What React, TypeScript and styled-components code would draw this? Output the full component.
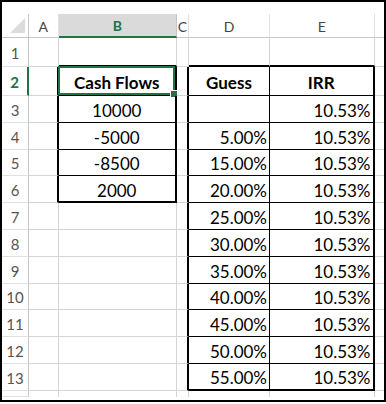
import { Fragment } from 'react';
import styled, { createGlobalStyle } from 'styled-components';

type Edge = 'grid' | 'thin' | 'thick' | 'none';

const GRID = '#d4d4d4';
const GREEN = '#217346';

const GlobalStyle = createGlobalStyle`
  html, body {
    margin: 0;
    padding: 0;
    background: #fff;
  }
`;

const Frame = styled.div`
  width: 386px;
  height: 402px;
  box-sizing: border-box;
  border: 2px solid #000;
  padding-top: 12px;
  overflow: hidden;
  background: #fff;
`;

const Sheet = styled.div`
  display: grid;
  grid-template-columns: 27px 29.5px 118.5px 12px 81px 104.5px 11px;
  grid-template-rows: 24px 28.5px 29.5px repeat(11, 26.8px) 6.2px;
  font-family: Lato, 'Open Sans', sans-serif;
  color: #000;
`;

const Corner = styled.div`
  position: relative;
  box-sizing: border-box;
  border-right: 1px solid #c6c6c6;
  border-bottom: 1px solid #c6c6c6;

  &::after {
    content: '';
    position: absolute;
    right: 3px;
    bottom: 4px;
    width: 0;
    height: 0;
    border-left: 15px solid transparent;
    border-bottom: 15px solid #dcdcdc;
  }
`;

const ColHead = styled.div<{ $active?: boolean }>`
  box-sizing: border-box;
  display: flex;
  align-items: center;
  justify-content: center;
  padding-top: 1px;
  font-size: 14px;
  font-weight: ${(p) => (p.$active ? 700 : 400)};
  color: ${(p) => (p.$active ? GREEN : '#444')};
  background: ${(p) => (p.$active ? '#dadada' : '#fff')};
  border-right: 1px solid ${(p) => (p.$active ? '#c6c6c6' : '#e1e1e1')};
  border-bottom: ${(p) => (p.$active ? `2px solid ${GREEN}` : '1px solid #c6c6c6')};
  overflow: hidden;
`;

const RowHead = styled.div<{ $active?: boolean }>`
  box-sizing: border-box;
  display: flex;
  align-items: center;
  justify-content: center;
  padding-top: 2px;
  font-size: 15px;
  font-weight: ${(p) => (p.$active ? 700 : 400)};
  color: ${(p) => (p.$active ? GREEN : '#555')};
  border-right: ${(p) => (p.$active ? `2px solid ${GREEN}` : '1px solid #c6c6c6')};
  border-bottom: 1px solid #e1e1e1;
`;

const edgeCss = (e: Edge) => {
  if (e === 'thick') return '2px solid #000';
  if (e === 'thin') return '1px solid #000';
  if (e === 'none') return '0';
  return `1px solid ${GRID}`;
};

const Cell = styled.div<{ $right: Edge; $bottom: Edge; $align?: 'center' | 'right'; $bold?: boolean }>`
  position: relative;
  box-sizing: border-box;
  display: flex;
  align-items: center;
  justify-content: ${(p) => (p.$align === 'right' ? 'flex-end' : 'center')};
  padding: 3px 2px 0 2px;
  font-size: 17px;
  font-weight: ${(p) => (p.$bold ? 700 : 400)};
  border-right: ${(p) => edgeCss(p.$right)};
  border-bottom: ${(p) => edgeCss(p.$bottom)};
  white-space: nowrap;
`;

const Selection = styled.div`
  position: absolute;
  top: -1px;
  left: -1px;
  right: 0;
  bottom: 0;
  border: 2px solid ${GREEN};
  pointer-events: none;
`;

const Handle = styled.div`
  position: absolute;
  right: -5px;
  bottom: -5px;
  width: 6px;
  height: 6px;
  background: ${GREEN};
  border: 1px solid #fff;
`;

interface Box {
  r0: number;
  r1: number;
  c0: number;
  c1: number;
}

const boxes: Box[] = [
  { r0: 2, r1: 6, c0: 2, c1: 2 },
  { r0: 2, r1: 13, c0: 4, c1: 5 },
];

const inBox = (b: Box, r: number, c: number) => r >= b.r0 && r <= b.r1 && c >= b.c0 && c <= b.c1;

const rightEdge = (r: number, c: number): Edge => {
  for (const b of boxes) {
    if (inBox(b, r, c) && c === b.c1) return 'thick';
    if (inBox(b, r, c + 1) && c + 1 === b.c0) return 'thick';
    if (inBox(b, r, c) && inBox(b, r, c + 1)) return 'thin';
  }
  return 'grid';
};

const bottomEdge = (r: number, c: number): Edge => {
  if (r === 14) return 'none';
  for (const b of boxes) {
    if (inBox(b, r, c) && r === b.r1) return 'thick';
    if (inBox(b, r + 1, c) && r + 1 === b.r0) return 'thick';
    if (inBox(b, r, c) && inBox(b, r + 1, c)) return 'thin';
  }
  return 'grid';
};

const cashFlows = ['10000', '-5000', '-8500', '2000'];
const guesses = ['', '5.00%', '15.00%', '20.00%', '25.00%', '30.00%', '35.00%', '40.00%', '45.00%', '50.00%', '55.00%'];

const cellContent = (r: number, c: number): { text: string; align?: 'center' | 'right'; bold?: boolean } => {
  if (r === 2 && c === 2) return { text: 'Cash Flows', bold: true };
  if (r === 2 && c === 4) return { text: 'Guess', bold: true };
  if (r === 2 && c === 5) return { text: 'IRR', bold: true };
  if (c === 2 && r >= 3 && r <= 6) return { text: cashFlows[r - 3] };
  if (c === 4 && r >= 3 && r <= 13) return { text: guesses[r - 3], align: 'right' };
  if (c === 5 && r >= 3 && r <= 13) return { text: '10.53%', align: 'right' };
  return { text: '' };
};

const columns = ['A', 'B', 'C', 'D', 'E', ''];
const rows = Array.from({ length: 14 }, (_, i) => i + 1);

export default function App() {
  return (
    <>
      <GlobalStyle />
      <Frame>
        <Sheet>
          <Corner />
          {columns.map((name, i) => (
            <ColHead key={`h-${i}`} $active={name === 'B'}>
              {name}
            </ColHead>
          ))}
          {rows.map((r) => (
            <Fragment key={`r-${r}`}>
              <RowHead $active={r === 2}>{r <= 13 ? r : ''}</RowHead>
              {columns.map((_, i) => {
                const c = i + 1;
                const content = cellContent(r, c);
                return (
                  <Cell
                    key={`c-${r}-${c}`}
                    $right={rightEdge(r, c)}
                    $bottom={bottomEdge(r, c)}
                    $align={content.align}
                    $bold={content.bold}
                  >
                    {content.text}
                    {r === 2 && c === 2 && (
                      <Selection>
                        <Handle />
                      </Selection>
                    )}
                  </Cell>
                );
              })}
            </Fragment>
          ))}
        </Sheet>
      </Frame>
    </>
  );
}
